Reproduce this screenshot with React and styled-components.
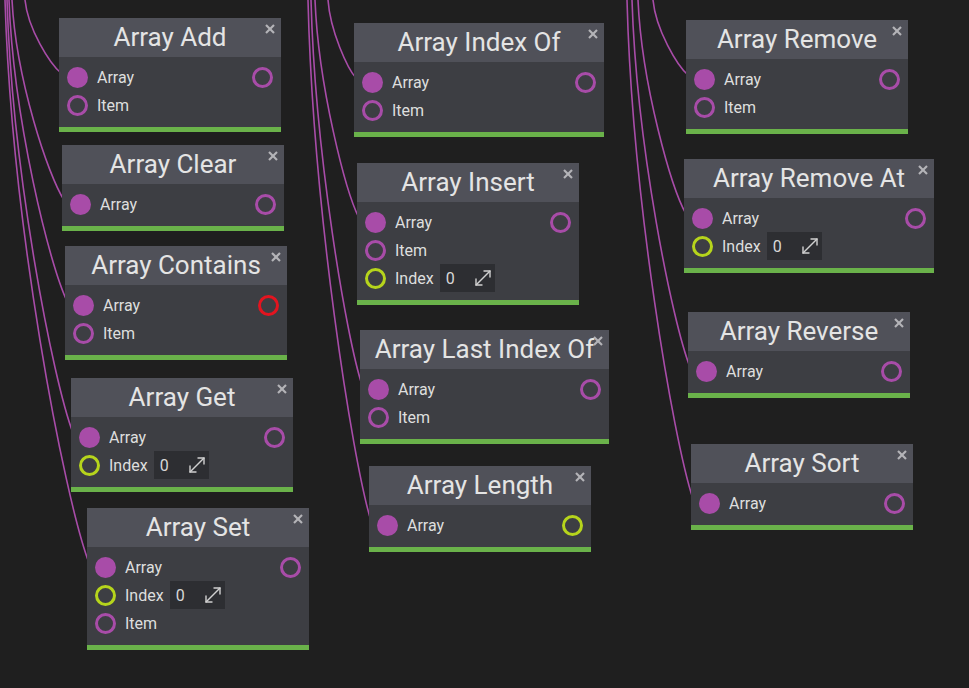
import React from 'react';
import styled, { createGlobalStyle } from 'styled-components';
import { MoveDiagonal } from 'lucide-react';

const PURPLE = '#a84ca8';
const LIME = '#b6d41c';
const RED = '#e3141f';

const GlobalStyle = createGlobalStyle`
  html, body {
    margin: 0;
    padding: 0;
    background: #1f1f1f;
  }
  body {
    font-family: Roboto, "Open Sans", sans-serif;
  }
`;

const Canvas = styled.div`
  position: relative;
  width: 969px;
  height: 688px;
  overflow: hidden;
  background: #1f1f1f;
`;

const Wires = styled.svg`
  position: absolute;
  left: 0;
  top: 0;
  width: 969px;
  height: 688px;
  path {
    fill: none;
    stroke: ${PURPLE};
    stroke-width: 1.6;
  }
`;

const Node = styled.div`
  position: absolute;
  left: ${(p) => p.$x}px;
  top: ${(p) => p.$y}px;
  width: ${(p) => p.$w}px;
  background: #3d3e43;
  border-bottom: 5px solid #6ab24a;
  display: flex;
  flex-direction: column;
`;

const Header = styled.div`
  position: relative;
  height: 39px;
  background: #505159;
  display: flex;
  align-items: center;
  justify-content: center;
  color: #e4e4e4;
  font-size: 26px;
  white-space: nowrap;
  padding-bottom: 1px;
  box-sizing: border-box;
`;

const Close = styled.svg`
  position: absolute;
  right: 6px;
  top: 6px;
  width: 10px;
  height: 10px;
  line {
    stroke: #b4b4b8;
    stroke-width: 2.2;
  }
`;

const Body = styled.div`
  display: flex;
  flex-direction: column;
  padding: 6px 8px 8px 8px;
`;

const Row = styled.div`
  display: flex;
  align-items: center;
  height: 28px;
`;

const Socket = styled.span`
  box-sizing: border-box;
  width: 21px;
  height: 21px;
  border-radius: 50%;
  flex-shrink: 0;
  background: ${(p) => (p.$filled ? p.$color : 'transparent')};
  border: ${(p) => (p.$filled ? 'none' : `3px solid ${p.$color}`)};
`;

const Label = styled.span`
  margin-left: 9px;
  color: #dedede;
  font-size: 16px;
`;

const Field = styled.div`
  margin-left: 6px;
  width: 55px;
  height: 28px;
  box-sizing: border-box;
  background: #2d2e32;
  display: flex;
  align-items: center;
  justify-content: space-between;
  padding: 0 0 0 6px;
  color: #d8d8d8;
  font-size: 16px;
`;

const Spacer = styled.span`
  flex: 1;
`;

const arr = { label: 'Array', filled: true, color: PURPLE };
const item = { label: 'Item', color: PURPLE };
const index = { label: 'Index', color: LIME, field: true };

const nodes = [
  { title: 'Array Add', x: 59, y: 18, w: 222, rows: [arr, item], out: PURPLE, top: 25 },
  { title: 'Array Clear', x: 62, y: 145, w: 222, rows: [arr], out: PURPLE, top: 12 },
  { title: 'Array Contains', x: 65, y: 246, w: 222, rows: [arr, item], out: RED, top: 9 },
  { title: 'Array Get', x: 71, y: 378, w: 222, rows: [arr, index], out: PURPLE, top: 7 },
  { title: 'Array Set', x: 87, y: 508, w: 222, rows: [arr, index, item], out: PURPLE, top: 5 },
  { title: 'Array Index Of', x: 354, y: 23, w: 250, rows: [arr, item], out: PURPLE, top: 328 },
  { title: 'Array Insert', x: 357, y: 163, w: 222, rows: [arr, item, index], out: PURPLE, top: 315 },
  { title: 'Array Last Index Of', x: 360, y: 330, w: 249, rows: [arr, item], out: PURPLE, top: 311 },
  { title: 'Array Length', x: 369, y: 466, w: 222, rows: [arr], out: LIME, top: 308 },
  { title: 'Array Remove', x: 686, y: 20, w: 222, rows: [arr, item], out: PURPLE, top: 653 },
  { title: 'Array Remove At', x: 684, y: 159, w: 250, rows: [arr, index], out: PURPLE, top: 638 },
  { title: 'Array Reverse', x: 688, y: 312, w: 222, rows: [arr], out: PURPLE, top: 632 },
  { title: 'Array Sort', x: 691, y: 444, w: 222, rows: [arr], out: PURPLE, top: 627 },
];

// wire from the top edge into the node's array socket
const wirePath = (n) => {
  const x0 = n.top;
  const tx = n.x + 2;
  const ty = n.y + 39 + 6 + 14 - 4;
  const dx = tx - x0;
  return `M ${x0} 0 C ${x0 + dx * 0.08} ${ty * 0.4}, ${tx - dx * 0.3} ${ty * 0.88}, ${tx} ${ty}`;
};

const GraphNode = ({ node }) => (
  <Node $x={node.x} $y={node.y} $w={node.w}>
    <Header>
      {node.title}
      <Close viewBox="0 0 10 10">
        <line x1="1" y1="1" x2="9" y2="9" />
        <line x1="9" y1="1" x2="1" y2="9" />
      </Close>
    </Header>
    <Body>
      {node.rows.map((r, i) => (
        <Row key={i}>
          <Socket $filled={r.filled} $color={r.color} />
          <Label>{r.label}</Label>
          {r.field && (
            <Field>
              0
              <MoveDiagonal size={24} color="#d0d0d0" strokeWidth={1.4} />
            </Field>
          )}
          <Spacer />
          {i === 0 && <Socket $color={node.out} />}
        </Row>
      ))}
    </Body>
  </Node>
);

const App = () => (
  <Canvas>
    <GlobalStyle />
    <Wires>
      {nodes.map((n) => (
        <path key={n.title} d={wirePath(n)} />
      ))}
    </Wires>
    {nodes.map((n) => (
      <GraphNode key={n.title} node={n} />
    ))}
  </Canvas>
);

export default App;
